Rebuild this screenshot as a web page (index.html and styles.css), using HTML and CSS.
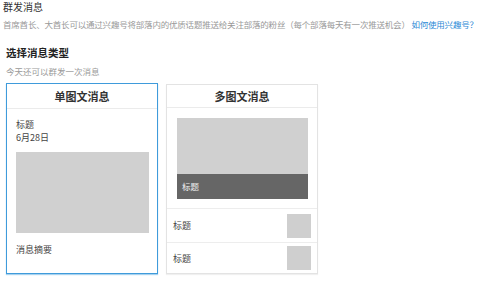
FILE: index.html
```html
<!DOCTYPE html>
<html lang="zh">
<head>
<meta charset="utf-8">
<title>群发消息</title>
<link rel="stylesheet" href="styles.css">
</head>
<body>
<div class="page">
  <h1 class="title">群发消息</h1>
  <p class="desc">首席酋长、大酋长可以通过兴趣号将部落内的优质话题推送给关注部落的粉丝（每个部落每天有一次推送机会） <a class="link" href="#">如何使用兴趣号？</a></p>
  <div class="section">
    <h2 class="subtitle">选择消息类型</h2>
    <p class="tip">今天还可以群发一次消息</p>
    <div class="cards">
      <div class="card card-active">
        <div class="card-head">单图文消息</div>
        <div class="single-body">
          <div class="s-title">标题</div>
          <div class="s-date">6月28日</div>
          <div class="s-img"></div>
          <div class="s-summary">消息摘要</div>
        </div>
      </div>
      <div class="card card-multi">
        <div class="card-head">多图文消息</div>
        <div class="multi-top">
          <div class="m-cover"><div class="m-cover-bar">标题</div></div>
        </div>
        <div class="m-row"><span class="m-row-title">标题</span><span class="m-thumb"></span></div>
        <div class="m-row"><span class="m-row-title">标题</span><span class="m-thumb"></span></div>
      </div>
    </div>
  </div>
</div>
</body>
</html>
```
FILE: styles.css
```css
html, body {
  margin: 0;
  padding: 0;
  background: #ffffff;
}
body {
  font-family: "Noto Sans CJK SC", "Noto Sans", sans-serif;
  color: #333;
}
.page {
  padding-left: 3px;
  width: 497px;
  height: 286px;
  overflow: hidden;
}
.title {
  margin: 0;
  font-size: 10px;
  font-weight: normal;
  line-height: 14px;
  color: #333;
}
.desc {
  margin: 4px 0 0 0;
  font-size: 8.5px;
  letter-spacing: -0.2px;
  line-height: 12px;
  color: #999;
  white-space: nowrap;
}
.link {
  color: #2b89d6;
  text-decoration: none;
}
.section {
  padding-left: 3px;
}
.subtitle {
  margin: 16px 0 0 0;
  font-size: 10.5px;
  font-weight: bold;
  line-height: 14px;
  color: #222;
}
.tip {
  margin: 5px 0 0 0;
  font-size: 8.5px;
  line-height: 12px;
  color: #999;
}
.cards {
  display: flex;
  align-items: flex-start;
  gap: 8px;
  margin-top: 6px;
}
.card {
  box-sizing: border-box;
  width: 152px;
  border: 1px solid #e3e3e3;
  background: #fff;
}
.card-active {
  height: 191px;
  border-color: #3f9bdb;
  box-shadow: 0 1px 1px rgba(63, 155, 219, 0.45);
}
.card-multi {
  margin-top: 1px;
  height: 190px;
  box-shadow: 0 1px 1px rgba(0, 0, 0, 0.06);
}
.card-head {
  height: 24px;
  line-height: 24px;
  text-align: center;
  font-size: 11px;
  font-weight: bold;
  color: #333;
  border-bottom: 1px solid #ebebeb;
}
.card-multi .card-head {
  height: 22px;
  line-height: 22px;
}
.single-body {
  padding: 9px 8px 0 9px;
}
.s-title, .s-date {
  font-size: 9px;
  line-height: 13px;
  color: #444;
}
.s-img {
  margin-top: 8px;
  height: 81px;
  background: #d0d0d0;
}
.s-summary {
  margin-top: 11px;
  font-size: 9px;
  line-height: 12px;
  color: #444;
}
.multi-top {
  padding: 10px 9px 9px 10px;
  border-bottom: 1px solid #ededed;
}
.m-cover {
  height: 81px;
  background: #d0d0d0;
  display: flex;
  flex-direction: column;
  justify-content: flex-end;
}
.m-cover-bar {
  height: 25px;
  line-height: 25px;
  background: #666;
  color: #f0f0f0;
  font-size: 8.5px;
  padding-left: 5px;
}
.m-row {
  display: flex;
  align-items: center;
  justify-content: space-between;
  height: 33px;
  padding: 0 6px 0 6px;
  border-bottom: 1px solid #ededed;
}
.m-row:last-child {
  border-bottom: none;
  height: 30px;
}
.m-row-title {
  font-size: 9px;
  color: #444;
}
.m-thumb {
  width: 24px;
  height: 24px;
  background: #cfcfcf;
}
```
